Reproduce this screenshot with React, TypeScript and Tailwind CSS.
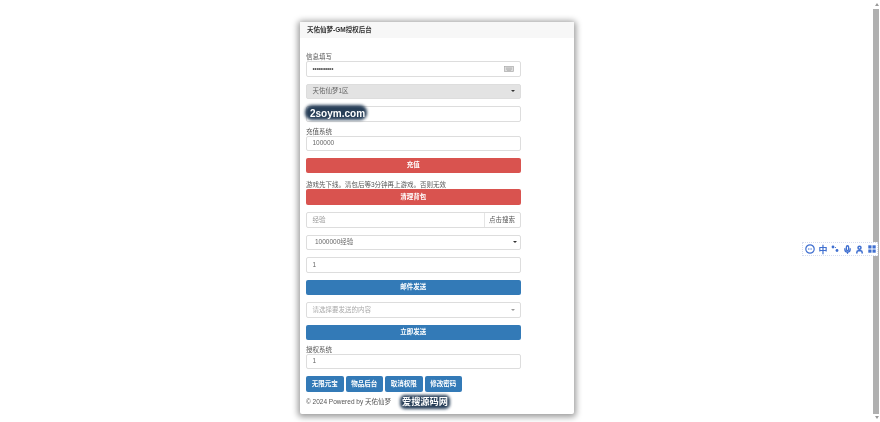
import { Mic, User } from "lucide-react";
import type { ReactNode } from "react";

const font = `"Liberation Sans", "Noto Sans CJK SC", sans-serif`;

function Caret({ className = "border-t-[#333]" }: { className?: string }) {
  return <span className={`w-0 h-0 border-x-[2px] border-x-transparent border-t-[2.5px] ${className}`} />;
}

function Field({ className = "mt-[7px]", value, bg = "bg-white", color = "text-[#666]", children }: {
  className?: string;
  value: string;
  bg?: string;
  color?: string;
  children?: ReactNode;
}) {
  return (
    <div className={`h-[15.5px] flex items-center justify-between pl-[5.5px] pr-[5px] border border-[#ddd] rounded-[2px] ${bg} ${color} ${className}`}>
      <span>{value}</span>
      {children}
    </div>
  );
}

function Btn({ label, color = "bg-[#337ab7]", className = "mt-[7px]" }: { label: string; color?: string; className?: string }) {
  return (
    <div className={`h-[15.5px] rounded-[2px] flex items-center justify-center font-bold text-white ${color} ${className}`}>{label}</div>
  );
}

function SmallBtn({ label }: { label: string }) {
  return (
    <div className="w-[37.5px] h-[15.5px] rounded-[2px] bg-[#337ab7] font-bold text-white flex items-center justify-center">{label}</div>
  );
}

function Label({ text, className = "mt-[5px]" }: { text: string; className?: string }) {
  return <div className={`h-[9px] leading-[9px] text-[#555] ${className}`}>{text}</div>;
}

export default function App() {
  return (
    <div className="relative w-[880px] h-[422px] overflow-hidden bg-white text-[6.5px]" style={{ fontFamily: font }}>
      <div className="w-[873px] flex justify-center blur-[0.35px]">
        <div className="relative w-[274px] h-[391.5px] mt-[22px] bg-white rounded-[2px] shadow-[0_1px_6px_2px_rgba(0,0,0,0.4)]">
          <div className="h-[16px] px-[7.5px] flex items-center bg-[#f7f7f7] font-bold text-[#333]">天佑仙梦-GM授权后台</div>

          <div className="w-[214.5px] ml-[6.5px] pt-[14px]">
            <Label text="信息填写" className="" />
            <Field className="" value="••••••••••" color="text-[#555] tracking-[-0.2px]">
              <svg width="10" height="6" viewBox="0 0 10 6" className="mr-[0.5px]">
                <rect x="0.5" y="0.5" width="9" height="5" fill="#ddd" stroke="#aaa" strokeWidth="0.7" />
                <path d="M2 2h6M2 3.2h6M3 4.4h4" stroke="#999" strokeWidth="0.5" />
              </svg>
            </Field>
            <Field value="天佑仙梦1区" bg="bg-[#e3e3e3]">
              <Caret />
            </Field>
            <Field value="" />
            <Label text="充值系统" />
            <Field className="" value="100000" />
            <Btn label="充值" color="bg-[#d9534f]" className="mt-[6.5px]" />
            <Label text="游戏先下线。清包后等3分钟再上游戏。否则无效" className="mt-[6.5px]" />
            <Btn label="清理背包" color="bg-[#d9534f]" className="mt-[0.5px]" />

            <div className="mt-[7.5px] h-[15.5px] flex border border-[#ddd] rounded-[2px]">
              <div className="flex-1 flex items-center pl-[5.5px] text-[#999]">经验</div>
              <div className="w-[36px] flex items-center justify-center border-l border-[#e5e5e5] text-[#555]">点击搜索</div>
            </div>

            <Field value="1000000经验" className="mt-[7px] !pl-[8px] !pr-[3px]">
              <Caret />
            </Field>
            <Field value="1" />
            <Btn label="邮件发送" />
            <Field value="请选择要发送的内容" color="text-[#aaa]">
              <Caret className="border-t-[#999]" />
            </Field>
            <Btn label="立即发送" />
            <Label text="授权系统" className="mt-[4.5px]" />
            <Field className="" value="1" />

            <div className="mt-[7px] flex gap-[2px]">
              <SmallBtn label="无限元宝" />
              <SmallBtn label="物品后台" />
              <SmallBtn label="取消权限" />
              <SmallBtn label="修改密码" />
            </div>
            <div className="mt-[5.5px] h-[9px] leading-[9px] text-[#555]">© 2024 Powered by 天佑仙梦</div>
          </div>
        </div>
      </div>

      {/* watermarks */}
      <div className="absolute left-[305px] top-[105px] w-[62px] h-[15px] rounded-[7px] bg-[#1d3550] opacity-95 blur-[1.5px]" />
      <div className="absolute left-[310px] top-[106px] h-[14px] flex items-center text-white font-bold text-[10px] blur-[0.3px]">
        2soym.com
      </div>
      <div className="absolute left-[400px] top-[394.5px] w-[50px] h-[14px] rounded-[5px] bg-[#1d3550] opacity-95 blur-[1.5px]" />
      <div className="absolute left-[402px] top-[395px] h-[13px] flex items-center text-white font-bold text-[9.2px] blur-[0.3px]" style={{ fontFamily: `"Noto Sans CJK SC", sans-serif` }}>
        爱搜源码网
      </div>

      {/* scrollbar */}
      <div className="absolute right-0 top-0 w-[7px] h-[422px] bg-white flex flex-col items-center justify-between py-[3px]">
        <span className="w-0 h-0 border-x-[2px] border-x-transparent border-b-[3px] border-b-[#999]" />
        <span className="w-0 h-0 border-x-[2px] border-x-transparent border-t-[3px] border-t-[#999]" />
      </div>
      <div className="absolute left-[873px] top-[9px] w-[6px] h-[405px] bg-[#b0b0b0]" />

      {/* input method toolbar */}
      <div className="absolute left-[802px] top-[242px] w-[76px] h-[14px] bg-white border border-dotted border-[#d5dcf0] flex items-center justify-between pl-[2px] pr-[1px] text-[#3f6fd0] blur-[0.2px]">
        <svg width="10" height="10" viewBox="0 0 10 10">
          <circle cx="5" cy="5" r="4.2" fill="none" stroke="#3f6fd0" strokeWidth="1.2" />
          <path d="M3 5h4" stroke="#3f6fd0" strokeWidth="1" strokeDasharray="1 0.6" />
        </svg>
        <span className="text-[9px] leading-none font-bold" style={{ fontFamily: `"Noto Sans CJK SC", sans-serif` }}>中</span>
        <svg width="8" height="8" viewBox="0 0 8 8" fill="#3f6fd0">
          <circle cx="2" cy="2" r="1.4" />
          <circle cx="6" cy="5.5" r="1.4" />
          <circle cx="4.5" cy="2.5" r="0.6" />
        </svg>
        <Mic size={9} strokeWidth={3.5} />
        <User size={9} strokeWidth={4} />
        <svg width="8" height="8" viewBox="0 0 8 8" fill="#3f6fd0">
          <rect x="0.3" y="0.3" width="3.2" height="3.2" />
          <rect x="4.5" y="0.3" width="3.2" height="3.2" />
          <rect x="0.3" y="4.5" width="3.2" height="3.2" />
          <rect x="4.5" y="4.5" width="3.2" height="3.2" />
        </svg>
      </div>
    </div>
  );
}
